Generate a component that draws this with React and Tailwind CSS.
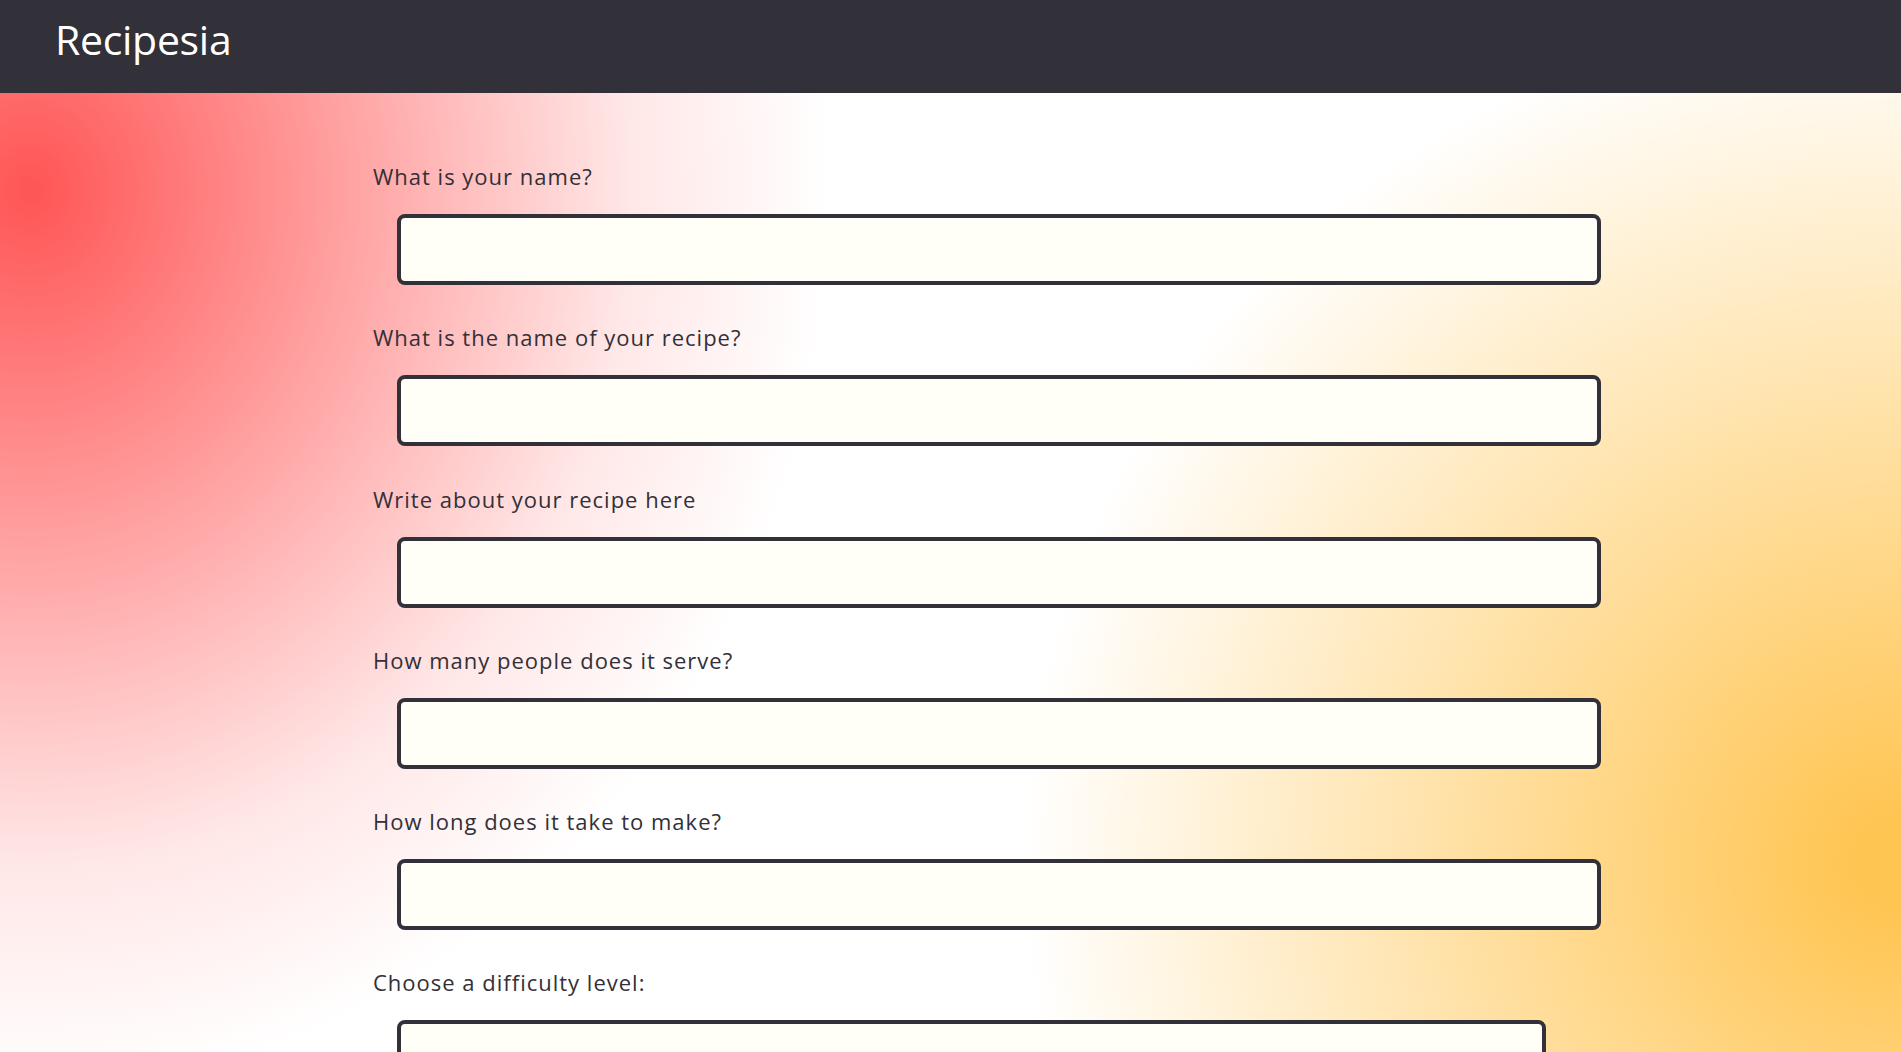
import React from 'react';

const FIELDS = [
  { label: 'What is your name?', w: 'w-[1204px]' },
  { label: 'What is the name of your recipe?', w: 'w-[1204px]' },
  { label: 'Write about your recipe here', w: 'w-[1204px]' },
  { label: 'How many people does it serve?', w: 'w-[1204px]' },
  { label: 'How long does it take to make?', w: 'w-[1204px]' },
  { label: 'Choose a difficulty level:', w: 'w-[1149px]' },
];

export default function App() {
  return (
    <div className="min-h-screen font-['Open_Sans','Liberation_Sans',sans-serif] text-[#323038]">
      <header className="flex h-[93px] items-start bg-[#323038] px-[55px] pt-[13px]">
        <h1 className="text-[41px] leading-[52px] font-medium tracking-[-0.3px] text-white">Recipesia</h1>
      </header>

      {/* red and yellow blobs over white, like the original page */}
      <main className="h-[959px] overflow-hidden bg-white bg-[radial-gradient(ellipse_800px_900px_at_30px_97px,#ff5555_0%,rgba(255,85,85,0.52)_42%,rgba(255,85,85,0.14)_75%,rgba(255,85,85,0)_100%),radial-gradient(ellipse_880px_860px_at_1901px_770px,#ffc552_0%,#ffc552_5%,rgba(255,197,82,0)_100%)] pl-[373px] pt-[69px]">
        {FIELDS.map((f) => (
          <div key={f.label} className="mb-[38.3px]">
            <label className="block text-[22px] leading-[28px] tracking-[1px]">{f.label}</label>
            <input
              type="text"
              className={`mt-[24px] ml-[24px] block h-[71px] ${f.w} rounded-[8px] border-4 border-[#323038] bg-[#fffff8] outline-none`}
            />
          </div>
        ))}
      </main>
    </div>
  );
}
